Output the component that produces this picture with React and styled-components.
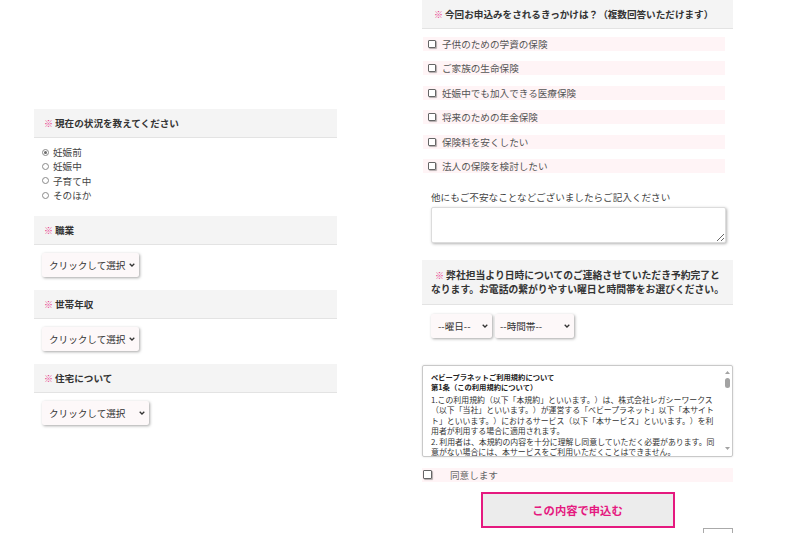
import React from 'react';
import styled, { createGlobalStyle } from 'styled-components';

const GlobalStyle = createGlobalStyle`
  html, body {
    margin: 0;
    padding: 0;
    background: #fff;
  }
  body {
    font-family: "Noto Sans CJK JP", "Noto Sans", sans-serif;
    font-size: 9.6px;
    color: #444;
    text-spacing-trim: space-all;
  }
`;

const Page = styled.div`
  display: flex;
  align-items: flex-start;
  gap: 85px;
  width: 800px;
  height: 533px;
  padding-left: 34px;
  box-sizing: border-box;
  overflow: hidden;
`;

const LeftColumn = styled.div`
  width: 303px;
  padding-top: 109px;
  display: flex;
  flex-direction: column;
`;

const RightColumn = styled.div`
  width: 311px;
  display: flex;
  flex-direction: column;
`;

const Heading = styled.div`
  background: #f4f4f4;
  border-bottom: 1px solid #e3e3e3;
  color: #333;
  font-weight: bold;
  font-size: ${(p) => p.$size || '9.6px'};
  line-height: ${(p) => (p.$center ? '14px' : '28px')};
  padding: ${(p) => (p.$center ? '8px 0' : `0 0 0 ${p.$indent || 10}px`)};
  text-align: ${(p) => (p.$center ? 'center' : 'left')};
  margin-top: ${(p) => p.$top || 0}px;
  white-space: nowrap;
`;

const Mark = styled.span`
  color: #e8378a;
  font-size: 9px;
  line-height: 0;
  margin-right: 2px;
`;

const RadioList = styled.div`
  margin-top: 7px;
  padding-left: 8px;
  display: flex;
  flex-direction: column;
`;

const RadioRow = styled.label`
  display: flex;
  align-items: center;
  gap: 4px;
  height: 14.3px;
  color: #444;
`;

const RadioMark = styled.span`
  width: 5px;
  height: 5px;
  border: 1px solid #8a8a8a;
  border-radius: 50%;
  display: flex;
  align-items: center;
  justify-content: center;
  &::after {
    content: '';
    width: 3px;
    height: 3px;
    border-radius: 50%;
    background: ${(p) => (p.$checked ? '#6a6a6a' : 'transparent')};
  }
`;

const SelectBox = styled.div`
  width: ${(p) => p.$width}px;
  height: 24px;
  box-sizing: border-box;
  padding: 0 4px 0 ${(p) => p.$pad || 7}px;
  display: flex;
  align-items: center;
  justify-content: space-between;
  background: #fdf8f9;
  border-radius: 2px;
  box-shadow: 1px 1px 3px rgba(0, 0, 0, 0.35);
  color: #333;
  margin-top: ${(p) => p.$top || 0}px;
  margin-left: ${(p) => p.$left || 0}px;
`;

const SelectRow = styled.div`
  display: flex;
  gap: 3px;
  margin-top: 9px;
  padding-left: 9px;
`;

const CheckList = styled.div`
  margin-top: 8px;
  padding: 0 8px 0 1px;
  display: flex;
  flex-direction: column;
  gap: 10.4px;
`;

const CheckRow = styled.label`
  height: 14px;
  display: flex;
  align-items: center;
  gap: ${(p) => p.$gap || 6}px;
  padding-left: ${(p) => p.$pad ?? 5}px;
  background: #fff4f6;
  color: #555;
`;

const CheckBox = styled.span`
  width: ${(p) => p.$size || 6}px;
  height: ${(p) => p.$size || 6}px;
  border: 1px solid #666;
  border-radius: 1px;
  background: #fff;
  box-shadow: 1px 1px 1px rgba(0, 0, 0, 0.3);
`;

const FieldLabel = styled.div`
  margin-top: 17px;
  padding-left: 9px;
  line-height: 14px;
  color: #444;
`;

const TextArea = styled.textarea`
  display: block;
  margin: 3px 7px 0 9px;
  width: 295px;
  height: 36px;
  box-sizing: border-box;
  border: 1px solid #dcdcdc;
  border-radius: 2px;
  box-shadow: 1px 1px 3px rgba(0, 0, 0, 0.3);
  resize: vertical;
  font-family: inherit;
`;

const Terms = styled.div`
  margin-top: 27px;
  height: 92px;
  box-sizing: border-box;
  border: 1px solid #c9c9c9;
  border-radius: 2px;
  box-shadow: 0 0 2px rgba(0, 0, 0, 0.15);
  display: flex;
  overflow: hidden;
`;

const TermsText = styled.div`
  flex: 1;
  padding: 6px 0 0 8px;
  font-size: 7.9px;
  line-height: 10.4px;
  color: #333;
  white-space: nowrap;
  overflow: hidden;
`;

const TermsTitle = styled.div`
  font-weight: bold;
  font-size: 7.3px;
  line-height: 10px;
  color: #222;
  &:last-of-type {
    margin-bottom: 3px;
  }
`;

const ScrollTrack = styled.div`
  width: 10px;
  display: flex;
  flex-direction: column;
  align-items: center;
  padding: 5px 0 6px;
`;

const ScrollThumb = styled.div`
  width: 5px;
  height: 10px;
  margin-top: 4px;
  border-radius: 3px;
  background: #a3a3a3;
`;

const Spacer = styled.div`
  flex: 1;
`;

const AgreeRow = styled(CheckRow)`
  margin-top: 11px;
  color: #666;
`;

const SubmitButton = styled.button`
  align-self: center;
  margin-top: 10px;
  width: 194px;
  height: 36px;
  border: 2px solid #e5197f;
  background: #ececec;
  color: #e5197f;
  font-family: inherit;
  font-weight: bold;
  font-size: 11.3px;
`;

const CornerBox = styled.div`
  align-self: flex-end;
  width: 30px;
  height: 20px;
  box-sizing: border-box;
  border: 1px solid #aaa;
  border-bottom: none;
`;

const Chevron = () => (
  <svg width="6" height="4" viewBox="0 0 6 4">
    <path d="M0.7 0.8 L3 3 L5.3 0.8" fill="none" stroke="#333" strokeWidth="1.3" />
  </svg>
);

const Arrow = ({ down }) => (
  <svg width="5" height="3" viewBox="0 0 5 3">
    <path d={down ? 'M0 0 H5 L2.5 3 Z' : 'M0 3 H5 L2.5 0 Z'} fill="#a3a3a3" />
  </svg>
);

const situations = ['妊娠前', '妊娠中', '子育て中', 'そのほか'];

const reasons = [
  '子供のための学資の保険',
  'ご家族の生命保険',
  '妊娠中でも加入できる医療保険',
  '将来のための年金保険',
  '保険料を安くしたい',
  '法人の保険を検討したい',
];

const leftSelects = [
  { title: '職業', width: 97 },
  { title: '世帯年収', width: 97 },
  { title: '住宅について', width: 107 },
];

const App = () => (
  <>
    <GlobalStyle />
    <Page>
      <LeftColumn>
        <Heading>
          <Mark>※</Mark>現在の状況を教えてください
        </Heading>
        <RadioList>
          {situations.map((s, i) => (
            <RadioRow key={s}>
              <RadioMark $checked={i === 0} />
              {s}
            </RadioRow>
          ))}
        </RadioList>
        {leftSelects.map((f, i) => (
          <React.Fragment key={f.title}>
            <Heading $top={i === 0 ? 14 : 13}>
              <Mark>※</Mark>
              {f.title}
            </Heading>
            <SelectBox $width={f.width} $top={8} $left={8}>
              <span>クリックして選択</span>
              <Chevron />
            </SelectBox>
          </React.Fragment>
        ))}
      </LeftColumn>

      <RightColumn>
        <Heading $indent={12}>
          <Mark>※</Mark>今回お申込みをされるきっかけは？（複数回答いただけます）
        </Heading>
        <CheckList>
          {reasons.map((r) => (
            <CheckRow key={r}>
              <CheckBox />
              {r}
            </CheckRow>
          ))}
        </CheckList>
        <FieldLabel>他にもご不安なことなどございましたらご記入ください</FieldLabel>
        <TextArea />
        <Heading $center $top={17} $size="9.8px">
          <Mark>※</Mark>弊社担当より日時についてのご連絡させていただき予約完了と
          <br />
          なります。お電話の繋がりやすい曜日と時間帯をお選びください。
        </Heading>
        <SelectRow>
          <SelectBox $width={61}>
            <span>--曜日--</span>
            <Chevron />
          </SelectBox>
          <SelectBox $width={79} $pad={5}>
            <span>--時間帯--</span>
            <Chevron />
          </SelectBox>
        </SelectRow>
        <Terms>
          <TermsText>
            <TermsTitle>ベビープラネットご利用規約について</TermsTitle>
            <TermsTitle>第1条（この利用規約について）</TermsTitle>
            1.この利用規約（以下「本規約」といいます。）は、株式会社レガシーワークス
            <br />
            （以下「当社」といいます。）が運営する「ベビープラネット」以下「本サイト
            <br />
            ト」といいます。）におけるサービス（以下「本サービス」といいます。）を利
            <br />
            用者が利用する場合に適用されます。
            <br />
            2. 利用者は、本規約の内容を十分に理解し同意していただく必要があります。同
            <br />
            意がない場合には、本サービスをご利用いただくことはできません。
          </TermsText>
          <ScrollTrack>
            <Arrow />
            <ScrollThumb />
            <Spacer />
            <Arrow down />
          </ScrollTrack>
        </Terms>
        <AgreeRow $pad={1} $gap={18}>
          <CheckBox $size={7} />
          同意します
        </AgreeRow>
        <SubmitButton>この内容で申込む</SubmitButton>
        <CornerBox />
      </RightColumn>
    </Page>
  </>
);

export default App;
